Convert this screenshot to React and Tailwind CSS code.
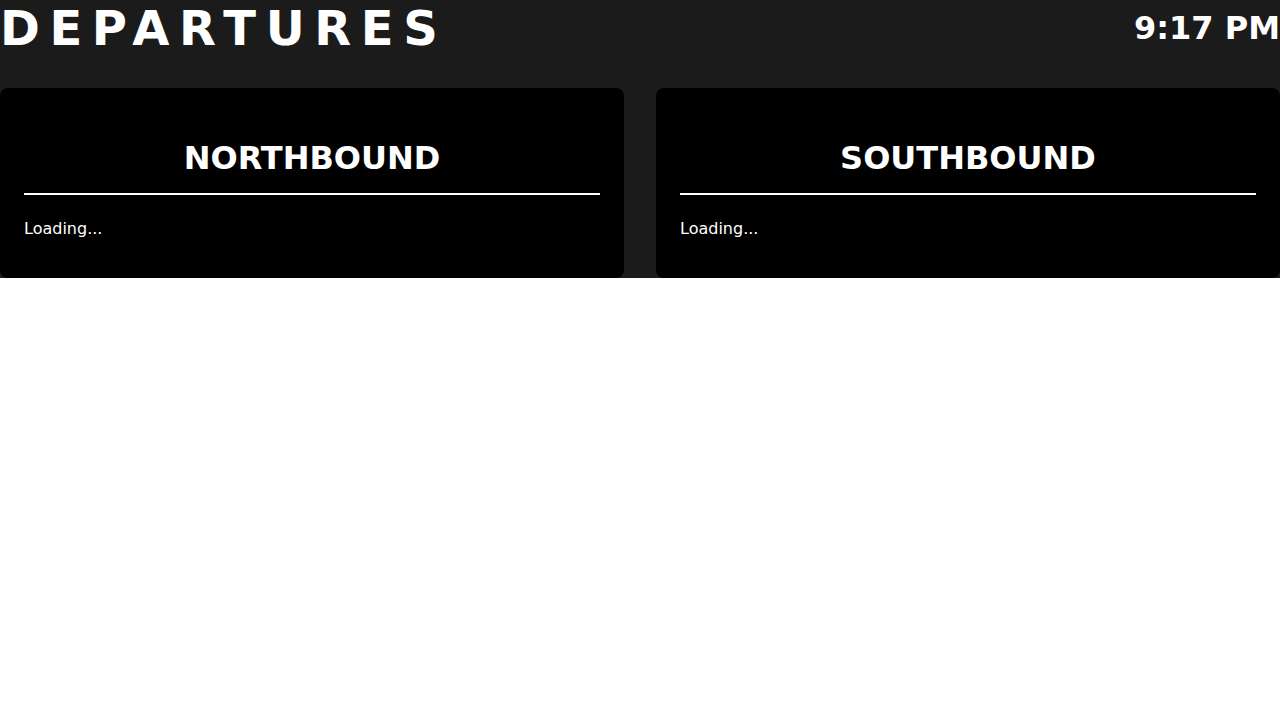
export default function App() {
  const dirs = ["NORTHBOUND", "SOUTHBOUND"];
  return (
    <div className="bg-[#1b1b1b] text-white" style={{ fontFamily: '"DejaVu Sans", sans-serif' }}>
      <header className="flex justify-between items-center mb-8">
        <h1 className="text-[48px] leading-[normal] font-bold tracking-[0.2em] m-0">DEPARTURES</h1>
        <div className="text-[32px] leading-[normal] font-bold">9:17 PM</div>
      </header>
      <div className="grid grid-cols-2 gap-8">
        {dirs.map((d) => (
          <section key={d} className="bg-black rounded-lg p-6">
            <h2 className="text-[32px] leading-[normal] font-bold text-center mt-[27px] mb-6 pb-4 border-b-2 border-white">{d}</h2>
            <p className="text-base leading-[normal] mb-4">Loading...</p>
          </section>
        ))}
      </div>
    </div>
  );
}
